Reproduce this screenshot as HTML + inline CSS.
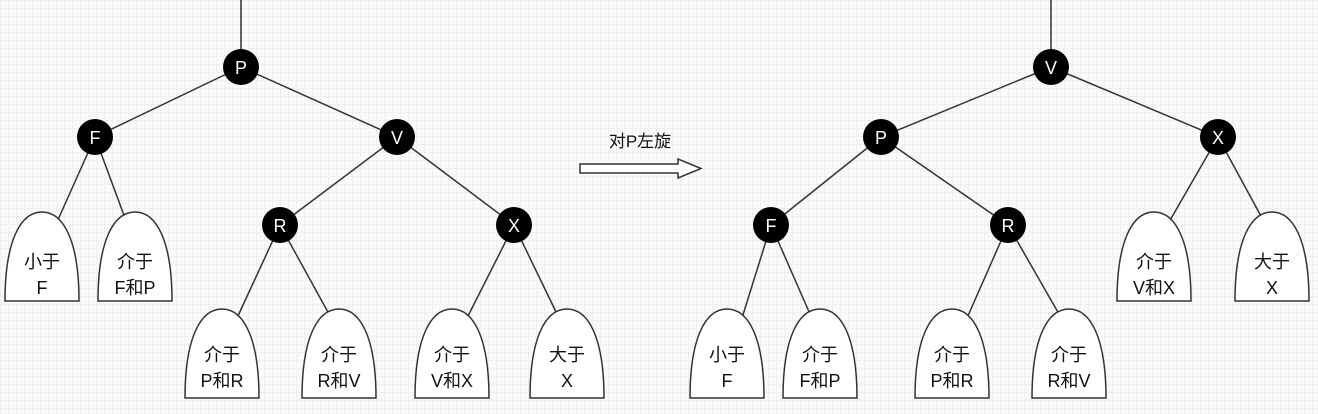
<!DOCTYPE html>
<html><head><meta charset="utf-8"><style>
html,body{margin:0;padding:0;}
body{width:1318px;height:409px;overflow:hidden;background-color:#fafafa;
background-image:linear-gradient(#f0f0f0 1px,transparent 1px),linear-gradient(90deg,#f0f0f0 1px,transparent 1px);
background-size:8px 8px;}
svg text{font-family:"Liberation Sans","Noto Sans CJK SC",sans-serif;}
</style></head><body>
<svg width="1318" height="409" viewBox="0 0 1318 409" xmlns="http://www.w3.org/2000/svg">
<defs>
<symbol id="arch" overflow="visible">
<path d="M-37,89 C-37,30 -22,0 0,0 C22,0 37,30 37,89 Z" fill="#fff" stroke="#333" stroke-width="1.5"/>
</symbol>
</defs>
<g stroke="#333" stroke-width="1.5">
<line x1="241" y1="0" x2="241" y2="67"/>
<line x1="241" y1="67" x2="95" y2="137"/>
<line x1="241" y1="67" x2="397" y2="137"/>
<line x1="95" y1="137" x2="57" y2="222"/>
<line x1="95" y1="137" x2="125" y2="218"/>
<line x1="397" y1="137" x2="280" y2="225"/>
<line x1="397" y1="137" x2="514" y2="225"/>
<line x1="280" y1="225" x2="237" y2="318"/>
<line x1="280" y1="225" x2="329" y2="314"/>
<line x1="514" y1="225" x2="467" y2="318"/>
<line x1="514" y1="225" x2="557" y2="314"/>
<line x1="1051" y1="0" x2="1051" y2="67"/>
<line x1="1051" y1="67" x2="881" y2="137"/>
<line x1="1051" y1="67" x2="1218" y2="137"/>
<line x1="881" y1="137" x2="771" y2="225"/>
<line x1="881" y1="137" x2="1008" y2="225"/>
<line x1="1218" y1="137" x2="1169" y2="222"/>
<line x1="1218" y1="137" x2="1262" y2="218"/>
<line x1="771" y1="225" x2="742" y2="318"/>
<line x1="771" y1="225" x2="810" y2="314"/>
<line x1="1008" y1="225" x2="967" y2="318"/>
<line x1="1008" y1="225" x2="1059" y2="314"/>
</g>
<g>
<use href="#arch" x="42" y="212"/><use href="#arch" x="135" y="212"/>
<use href="#arch" x="222" y="309"/><use href="#arch" x="339" y="309"/>
<use href="#arch" x="452" y="309"/><use href="#arch" x="567" y="309"/>
<use href="#arch" x="727" y="309"/><use href="#arch" x="820" y="309"/>
<use href="#arch" x="952" y="309"/><use href="#arch" x="1069" y="309"/>
<use href="#arch" x="1154" y="212"/><use href="#arch" x="1272" y="212"/>
</g>
<g font-size="18" fill="#111" text-anchor="middle">
<text x="42" y="268">小于</text><text x="42" y="294">F</text>
<text x="135" y="268">介于</text><text x="135" y="294">F和P</text>
<text x="222" y="361">介于</text><text x="222" y="387">P和R</text>
<text x="339" y="361">介于</text><text x="339" y="387">R和V</text>
<text x="452" y="361">介于</text><text x="452" y="387">V和X</text>
<text x="567" y="361">大于</text><text x="567" y="387">X</text>
<text x="727" y="361">小于</text><text x="727" y="387">F</text>
<text x="820" y="361">介于</text><text x="820" y="387">F和P</text>
<text x="952" y="361">介于</text><text x="952" y="387">P和R</text>
<text x="1069" y="361">介于</text><text x="1069" y="387">R和V</text>
<text x="1154" y="268">介于</text><text x="1154" y="294">V和X</text>
<text x="1272" y="268">大于</text><text x="1272" y="294">X</text>
</g>
<g fill="#000">
<circle cx="241" cy="67" r="18"/><circle cx="95" cy="137" r="18"/><circle cx="397" cy="137" r="18"/>
<circle cx="280" cy="225" r="18"/><circle cx="514" cy="225" r="18"/>
<circle cx="1051" cy="67" r="18"/><circle cx="881" cy="137" r="18"/><circle cx="1218" cy="137" r="18"/>
<circle cx="771" cy="225" r="18"/><circle cx="1008" cy="225" r="18"/>
</g>
<g fill="#fff" font-size="18" text-anchor="middle">
<text x="241" y="74">P</text><text x="95" y="144">F</text><text x="397" y="144">V</text>
<text x="280" y="232">R</text><text x="514" y="232">X</text>
<text x="1051" y="74">V</text><text x="881" y="144">P</text><text x="1218" y="144">X</text>
<text x="771" y="232">F</text><text x="1008" y="232">R</text>
</g>
<text x="640" y="147" font-size="17" text-anchor="middle" fill="#111">对P左旋</text>
<path d="M580,164 L678,164 L678,159 L701,168.5 L678,178 L678,173 L580,173 Z" fill="#fff" stroke="#333" stroke-width="1.5"/>
</svg>
</body></html>
